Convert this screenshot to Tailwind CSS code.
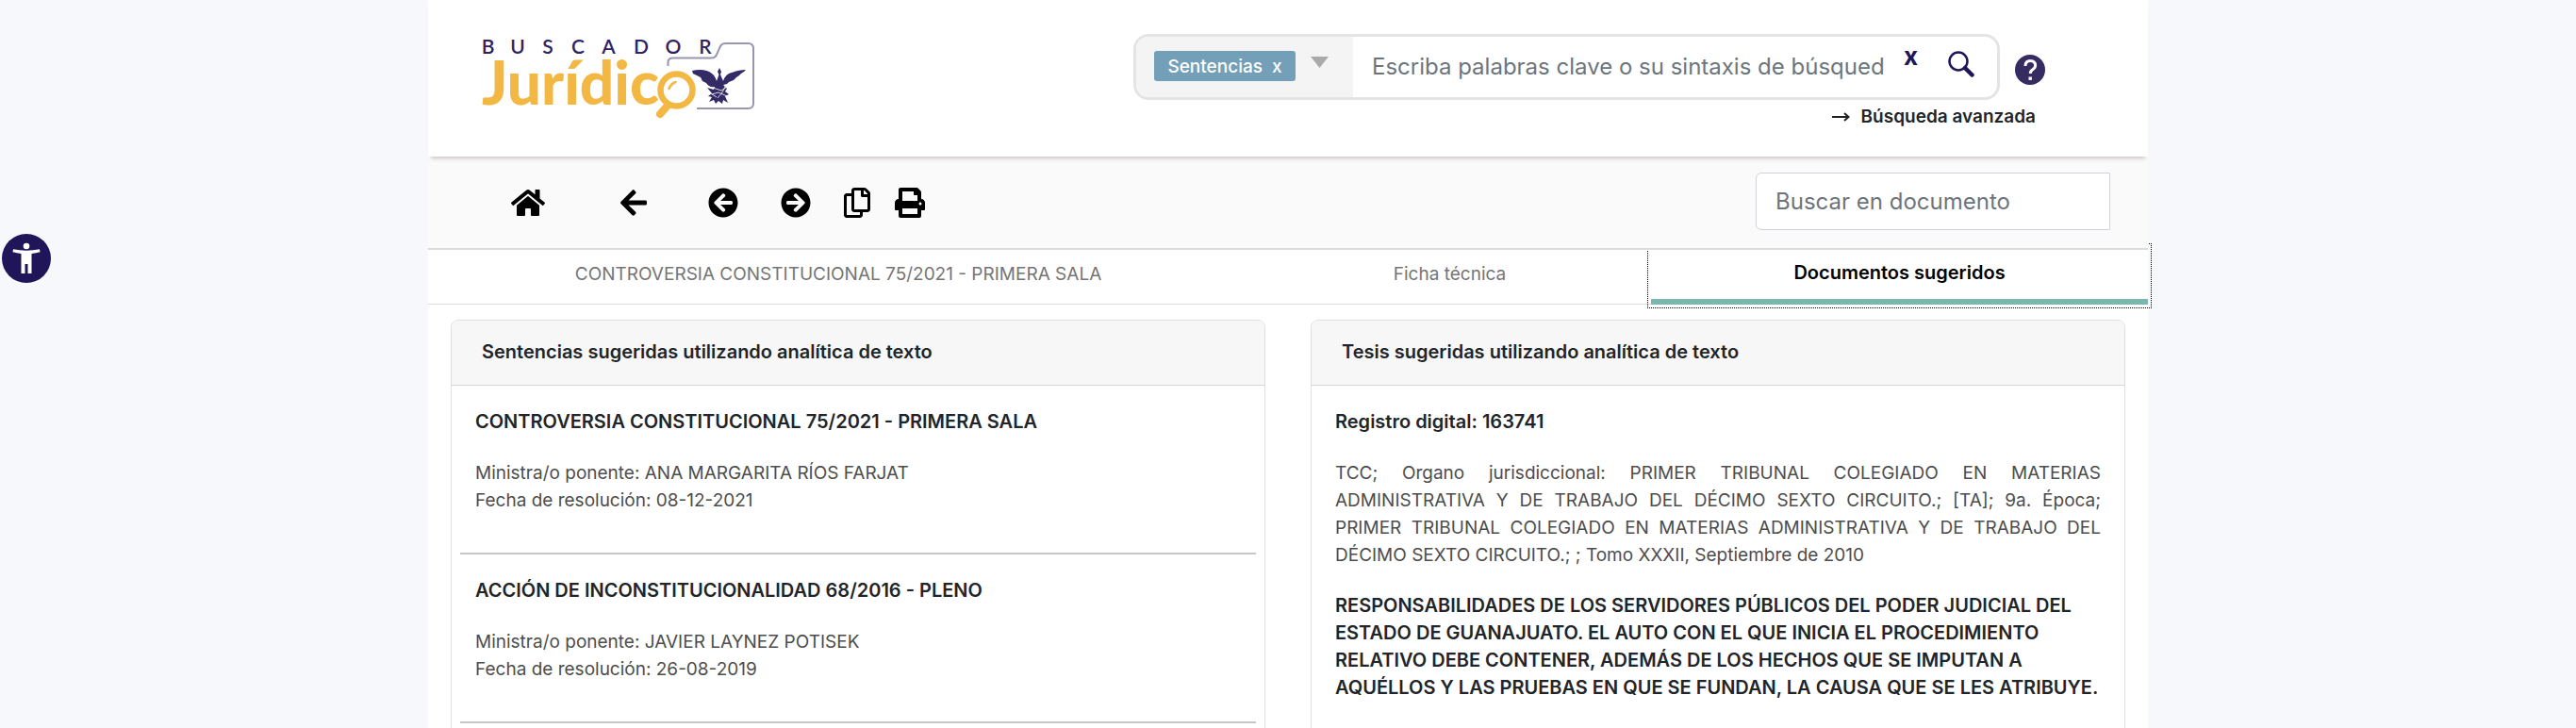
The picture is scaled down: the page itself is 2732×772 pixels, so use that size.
<!DOCTYPE html>
<html lang="es">
<head>
<meta charset="utf-8">
<title>Buscador Jurídico</title>
<script src="https://cdn.jsdelivr.net/npm/@tailwindcss/browser@4"></script>
</head>
<body class="bg-[#f7f8fc] font-[Inter,'Noto_Sans',sans-serif] text-[19px] leading-[29px] text-[#212529]">
<button aria-label="Accesibilidad" class="fixed left-0.5 top-[248px] z-30 size-[52px] rounded-full bg-[#201558]">
  <svg viewBox="0 0 52 52" class="size-full" fill="#fff"><circle cx="26" cy="13" r="3.300"/><path d="M12 16.200c9 1.900 19 1.900 28 0l.5 3c-3 .9-6 1.400-9 1.700V42h-4V32h-3v10h-4V20.900c-3-.3-6-.8-9-1.700z"/></svg>
</button>
<div class="mx-auto min-h-screen w-[calc(100%-908px)] bg-white">
  <header class="relative z-20 flex h-[166px] items-start bg-white pl-14 pr-[109px] shadow-[0_5px_4px_-3px_rgba(90,60,60,0.28)]">
    <a href="#" aria-label="Buscador Jurídico" class="mt-9 block">
      <svg class="h-[92px] w-[300px]" viewBox="510 36 300 92">
        <g fill="#2d2463" font-family="Lato, sans-serif" font-size="21" font-weight="600" text-anchor="middle">
          <text x="517.500" y="56.500">B</text><text x="549" y="56.500">U</text><text x="581" y="56.500">S</text><text x="613" y="56.500">C</text><text x="645.500" y="56.500">A</text><text x="680" y="56.500">D</text><text x="714" y="56.500">O</text><text x="748" y="56.500">R</text>
        </g>
        <text x="511" y="111" fill="#f3b843" font-family="Lato, sans-serif" font-size="64" font-weight="900">Jurídic</text>
        <path d="M708.500 70v-4q0-4.500 5-4.500h41q4 0 5.500-3.500l4-9q1.500-3 5.500-3h24q5.500 0 5.500 5.500v58q0 5.500-5.500 5.500H739" fill="none" stroke="#9a96ad" stroke-width="2"/>
        <circle cx="717.500" cy="95.500" r="17" fill="#fff" stroke="#f3b843" stroke-width="6.500"/>
        <path d="M708 112l-8 9" stroke="#f3b843" stroke-width="8" stroke-linecap="round"/>
        <path d="M709.500 94q2-5 7-7" stroke="#f3b843" stroke-width="2.600" fill="none" stroke-linecap="round"/>
        <path fill="#332a66" d="M734 75c8-2 17-1 21 3 3 2 4 5 5 8l2.500-7-1.500-3 2-4 2 4-1 3 3 7c1-4 4-8 9-9 5-2 10-3 15-3-2 3-5 3-7 6l-3 2-3 3-5 2-2 2-4 1 4 4-2 3 4 3-4 2 3 7-5-3-1 4-4-3-3 3-2-4-5 2 3-5-4-1 4-3-5-6 7 2 1-3c-4 1-7-1-9-4l-4-2-2-4-4-2-4-2z"/>
        <path stroke="#fff" stroke-width=".8" fill="none" d="M756 93l9 3 8-5M755 100l7-2 9 4M761 104l5-6 4-8M752 98l8 5"/>
      </svg>
    </a>
    <div class="ml-auto mt-9">
      <div class="flex items-center gap-4">
        <div class="flex h-[70px] w-[919px] overflow-hidden rounded-2xl border-3 border-[#e4e4e4]">
          <div class="flex w-[230px] shrink-0 bg-[#f4f4f4] pl-[19px]">
            <button class="mt-[15px] flex h-8 w-[150px] items-center justify-center gap-2.5 rounded-[3px] bg-[#73a0b8] font-medium text-white"><span>Sentencias</span><span>x</span></button>
            <button aria-label="Abrir filtros" class="ml-4 mt-[21px] h-3"><svg width="19" height="12" fill="#aaa"><path d="M0 0h19L9.500 12z"/></svg></button>
          </div>
          <input type="text" aria-label="Búsqueda" placeholder="Escriba palabras clave o su sintaxis de búsqueda" class="ml-5 min-w-0 flex-1 pb-0.5 text-[24px] outline-none placeholder:text-[#6c757d]">
          <button aria-label="Limpiar" class="ml-5 mr-8 mt-1 h-8 text-[26px] font-bold text-[#201558]">x</button>
          <button aria-label="Buscar" class="mr-6 mt-[15px] h-7"><svg width="28" height="28" fill="none" stroke="#201558"><circle cx="11" cy="11" r="9.500" stroke-width="2.500"/><path d="M18 18l7.500 7.500" stroke-width="4.500" stroke-linecap="round"/></svg></button>
        </div>
        <button aria-label="Ayuda" class="mt-1.5 size-8"><svg viewBox="0 0 32 32"><circle cx="16" cy="16" r="16" fill="#362c61"/><path d="M11 12q0-5.500 5.300-5.500t5.300 5q0 2.500-2.800 4.200-2.500 1.500-2.500 4.300" fill="none" stroke="#fff" stroke-width="3"/><path d="M14.500 23.500h3.400v3.400h-3.400z" fill="#fff"/></svg></button>
      </div>
      <div class="mr-2.5 mt-[3px] flex justify-end"><a href="#" class="flex items-center gap-3 font-semibold"><svg width="19" height="10" fill="none" stroke="#212121" stroke-width="2"><path d="M0 5h17M13 1l4.500 4-4.500 4"/></svg>Búsqueda avanzada</a></div>
    </div>
  </header>
  <div class="relative z-10 flex h-[99px] items-center border-b-2 border-[#dcdcdc] bg-[#fafafa] pl-[88px] pr-10 text-black">
    <button aria-label="Inicio"><svg width="36" height="32" viewBox="0 0 576 512" fill="currentColor"><path d="M280.370 148.260L96 300.110V464a16 16 0 0 0 16 16l112.060-.290a16 16 0 0 0 15.920-16V368a16 16 0 0 1 16-16h64a16 16 0 0 1 16 16v95.640a16 16 0 0 0 16 16.050L464 480a16 16 0 0 0 16-16V300L295.670 148.260a12.190 12.190 0 0 0-15.300 0zM571.600 251.470L488 182.560V44.050a12 12 0 0 0-12-12h-56a12 12 0 0 0-12 12v72.610L318.470 43a48 48 0 0 0-61 0L4.340 251.470a12 12 0 0 0-1.600 16.900l25.500 31A12 12 0 0 0 45.150 301l235.220-193.740a12.190 12.190 0 0 1 15.300 0L530.900 301a12 12 0 0 0 16.900-1.600l25.500-31a12 12 0 0 0-1.700-16.930z"/></svg></button>
    <button aria-label="Regresar" class="ml-20"><svg width="28" height="32" viewBox="0 0 448 512" fill="currentColor"><path d="M257.500 445.100l-22.200 22.200c-9.400 9.400-24.600 9.400-33.900 0L7 273c-9.400-9.400-9.400-24.600 0-33.900L201.400 44.700c9.400-9.400 24.600-9.400 33.900 0l22.200 22.200c9.500 9.500 9.300 25-.4 34.300L136.600 216H424c13.300 0 24 10.700 24 24v32c0 13.300-10.700 24-24 24H136.600l120.500 114.800c9.800 9.300 10 24.800.4 34.300z"/></svg></button>
    <button aria-label="Anterior" class="ml-[65px]"><svg width="32" height="32" viewBox="0 0 512 512" fill="currentColor"><path d="M256 504C119 504 8 393 8 256S119 8 256 8s248 111 248 248-111 248-248 248zm28.900-143.600L209.400 288H392c13.300 0 24-10.700 24-24v-16c0-13.300-10.700-24-24-24H209.400l75.500-72.400c9.700-9.300 9.900-24.800.4-34.300l-11-10.900c-9.400-9.400-24.600-9.400-33.900 0L107.700 239c-9.400 9.400-9.400 24.600 0 33.900l132.700 132.700c9.400 9.400 24.600 9.400 33.900 0l11-10.900c9.500-9.500 9.300-25-.4-34.300z"/></svg></button>
    <button aria-label="Siguiente" class="ml-[45px]"><svg width="32" height="32" viewBox="0 0 512 512" fill="currentColor"><path transform="matrix(-1 0 0 1 512 0)" d="M256 504C119 504 8 393 8 256S119 8 256 8s248 111 248 248-111 248-248 248zm28.900-143.600L209.400 288H392c13.300 0 24-10.700 24-24v-16c0-13.300-10.700-24-24-24H209.400l75.500-72.400c9.700-9.300 9.900-24.800.4-34.300l-11-10.900c-9.400-9.400-24.600-9.400-33.900 0L107.700 239c-9.400 9.400-9.400 24.600 0 33.900l132.700 132.700c9.400 9.400 24.600 9.400 33.900 0l11-10.900c9.500-9.500 9.300-25-.4-34.300z"/></svg></button>
    <button aria-label="Copiar" class="ml-[35px]"><svg width="28" height="32" viewBox="0 0 448 512" fill="currentColor"><path d="M433.941 65.941l-51.882-51.882A48 48 0 0 0 348.118 0H176c-26.510 0-48 21.490-48 48v48H48c-26.510 0-48 21.490-48 48v320c0 26.510 21.490 48 48 48h224c26.510 0 48-21.490 48-48v-48h80c26.510 0 48-21.490 48-48V99.882a48 48 0 0 0-14.059-33.941zM266 464H54a6 6 0 0 1-6-6V150a6 6 0 0 1 6-6h74v224c0 26.510 21.490 48 48 48h96v42a6 6 0 0 1-6 6zm128-96H182a6 6 0 0 1-6-6V54a6 6 0 0 1 6-6h106v88c0 13.255 10.745 24 24 24h88v202a6 6 0 0 1-6 6zm6-256h-64V48h9.632c1.591 0 3.117.632 4.243 1.757l48.368 48.368a6 6 0 0 1 1.757 4.243V112z"/></svg></button>
    <button aria-label="Imprimir" class="ml-[26px]"><svg width="32" height="32" viewBox="0 0 512 512" fill="currentColor"><path d="M448 192V77.250c0-8.490-3.370-16.620-9.370-22.630L393.370 9.370c-6-6-14.140-9.370-22.630-9.370H96C78.330 0 64 14.330 64 32v160c-35.350 0-64 28.650-64 64v112c0 8.840 7.160 16 16 16h48v96c0 17.670 14.330 32 32 32h320c17.670 0 32-14.330 32-32v-96h48c8.840 0 16-7.160 16-16V256c0-35.350-28.650-64-64-64zm-64 256H128v-96h256v96zm0-224H128V64h192v48c0 8.840 7.160 16 16 16h48v96zm48 72c-13.250 0-24-10.750-24-24 0-13.260 10.750-24 24-24s24 10.740 24 24c0 13.250-10.750 24-24 24z"/></svg></button>
    <input type="text" aria-label="Buscar en documento" placeholder="Buscar en documento" class="-mt-0.5 ml-auto h-[61px] w-[376px] rounded-l-md border border-[#ced4da] bg-white px-5 text-[24px] outline-none placeholder:text-[#6c757d]">
  </div>
  <nav class="flex h-[58px] border-b border-[#dcdcdc] text-[#757575]">
    <a href="#" class="flex grow-[870] basis-0 justify-center pt-[11px]">CONTROVERSIA CONSTITUCIONAL 75/2021 - PRIMERA SALA</a>
    <a href="#" class="flex grow-[427] basis-0 justify-center pt-[11px]">Ficha técnica</a>
    <a href="#" aria-current="page" class="-mb-px -mt-[3px] flex grow-[527] basis-0 justify-center border-b-6 border-[#7ab8ab] bg-white pt-[13px] text-[20px] font-semibold text-black outline-1 outline-offset-3 outline-dotted outline-black">Documentos sugeridos</a>
  </nav>
  <main class="grid grid-cols-2 items-start gap-12 px-6 pt-4">
    <section class="rounded-lg border border-[#dfdfdf] pb-10">
      <h2 class="rounded-t-lg border-b border-[#d5d5d5] bg-[#f7f7f7] pb-5 pl-8 pt-[19px] text-[20px] font-semibold">Sentencias sugeridas utilizando analítica de texto</h2>
      <article class="mx-[9px] border-b-2 border-[#c8c8c8] px-4 pb-[41px] pt-6"><h3 class="mb-[25px] text-[20px] font-semibold">CONTROVERSIA CONSTITUCIONAL 75/2021 - PRIMERA SALA</h3><p class="text-[#4d4d4d]">Ministra/o ponente: ANA MARGARITA RÍOS FARJAT<br>Fecha de resolución: 08-12-2021</p></article>
      <article class="mx-[9px] border-b-2 border-[#c8c8c8] px-4 pb-[41px] pt-6"><h3 class="mb-[25px] text-[20px] font-semibold">ACCIÓN DE INCONSTITUCIONALIDAD 68/2016 - PLENO</h3><p class="text-[#4d4d4d]">Ministra/o ponente: JAVIER LAYNEZ POTISEK<br>Fecha de resolución: 26-08-2019</p></article>
    </section>
    <section class="rounded-lg border border-[#dfdfdf]">
      <h2 class="rounded-t-lg border-b border-[#d5d5d5] bg-[#f7f7f7] pb-5 pl-8 pt-[19px] text-[20px] font-semibold">Tesis sugeridas utilizando analítica de texto</h2>
      <article class="px-[25px] pb-[42px] pt-6"><h3 class="mb-[25px] text-[20px] font-semibold">Registro digital: 163741</h3><p class="mb-[25px] text-justify text-[#4d4d4d]">TCC; Organo jurisdiccional: PRIMER TRIBUNAL COLEGIADO EN MATERIAS ADMINISTRATIVA Y DE TRABAJO DEL DÉCIMO SEXTO CIRCUITO.; [TA]; 9a. Época; PRIMER TRIBUNAL COLEGIADO EN MATERIAS ADMINISTRATIVA Y DE TRABAJO DEL DÉCIMO SEXTO CIRCUITO.; ; Tomo XXXII, Septiembre de 2010</p><p class="text-[20px] font-semibold">RESPONSABILIDADES DE LOS SERVIDORES PÚBLICOS DEL PODER JUDICIAL DEL ESTADO DE GUANAJUATO. EL AUTO CON EL QUE INICIA EL PROCEDIMIENTO RELATIVO DEBE CONTENER, ADEMÁS DE LOS HECHOS QUE SE IMPUTAN A AQUÉLLOS Y LAS PRUEBAS EN QUE SE FUNDAN, LA CAUSA QUE SE LES ATRIBUYE.</p></article>
    </section>
  </main>
</div>
</body>
</html>
